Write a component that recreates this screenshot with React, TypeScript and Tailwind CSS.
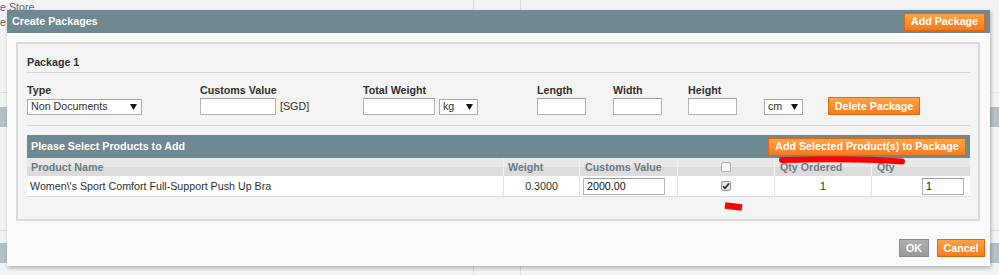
import React from "react";

const orange =
  "bg-[linear-gradient(to_bottom,#ffa346,#f57b1c)] border border-[#df6a0c] text-white font-bold flex items-center justify-center leading-none";

function Arrow() {
  return (
    <svg width="7" height="6" viewBox="0 0 7 6">
      <path d="M0 0 L7 0 L3.5 6 Z" fill="#111" />
    </svg>
  );
}

function Select({ w, text }: { w: string; text: string }) {
  return (
    <div
      className={`${w} h-[16px] border border-[#a9a9a9] bg-white flex items-center justify-between pl-[3px] pr-[4px] leading-none`}
    >
      <span>{text}</span>
      <Arrow />
    </div>
  );
}

function Input({ w, value }: { w: string; value?: string }) {
  return (
    <div
      className={`${w} h-[17px] border border-[#b3b3b3] border-t-[#9c9c9c] bg-white flex items-center pl-[3px] leading-none text-[#111]`}
    >
      {value}
    </div>
  );
}

function Field({
  w,
  label,
  children,
}: {
  w: string;
  label: string;
  children: React.ReactNode;
}) {
  return (
    <div className={`${w} flex flex-col gap-[2px]`}>
      <div className="h-[12px] leading-[12px] font-bold text-[#2f2f2f]">{label}</div>
      <div className="h-[17px] flex items-center">{children}</div>
    </div>
  );
}

function Background() {
  const col = (
    <>
      <div className="h-[14px]" />
      <div className="h-[20px] bg-[#b3c1c6]" />
      <div className="h-[104px] border-b border-[#dcdcdc]" />
      <div className="h-[12px]" />
      <div className="h-[20px] bg-[#b3c1c6]" />
    </>
  );
  return (
    <div className="flex h-full">
      <div className="w-[474px] border-r border-[#dcdcdc] flex flex-col">
        <div className="h-[93px] border-b border-[#dcdcdc] text-[#666] leading-[15px]">
          e Store
          <br />e
        </div>
        {col}
      </div>
      <div className="w-[47px] border-r border-[#dcdcdc]" />
      <div className="flex-1 flex flex-col">
        <div className="h-[93px] border-b border-[#e6e6e6]" />
        {col}
      </div>
    </div>
  );
}

export default function App() {
  return (
    <div className="relative w-[999px] h-[275px] overflow-hidden bg-[#f3f3f3] font-['Liberation_Sans',Arial,sans-serif] text-[10.7px] text-[#2f2f2f]">
      <Background />

      {/* Modal dialog */}
      <div className="absolute left-[7px] top-[10px] w-[983px] h-[256px] bg-[#fafafa] shadow-[1px_2px_4px_rgba(0,0,0,0.28)] flex flex-col">
        <div className="h-[23px] bg-[#6f8992] flex items-center justify-between pl-[5px] pr-[5px]">
          <span className="text-white font-bold">Create Packages</span>
          <div className={`${orange} w-[81px] h-[18px]`}>Add Package</div>
        </div>

        <div className="pl-[9px] pr-[10px] pt-[9px]">
          <div className="h-[179px] border-2 border-[#dadada] bg-[#f4f4f4] pl-[9px] pr-[8px]">
            <div className="pt-[12px] pb-[4px] leading-[12px] font-bold border-b border-[#d8d8d8]">
              Package 1
            </div>

            <div className="mt-[10px] pb-[10px] border-b border-[#d8d8d8] flex items-end">
              <Field w="w-[173px]" label="Type">
                <Select w="w-[115px]" text="Non Documents" />
              </Field>
              <Field w="w-[163px]" label="Customs Value">
                <Input w="w-[76px]" />
                <span className="ml-[4px]">[SGD]</span>
              </Field>
              <Field w="w-[174px]" label="Total Weight">
                <Input w="w-[72px]" />
                <div className="ml-[4px]">
                  <Select w="w-[39px]" text="kg" />
                </div>
              </Field>
              <Field w="w-[76px]" label="Length">
                <Input w="w-[49px]" />
              </Field>
              <Field w="w-[75px]" label="Width">
                <Input w="w-[49px]" />
              </Field>
              <Field w="w-[76px]" label="Height">
                <Input w="w-[49px]" />
              </Field>
              <Field w="w-[64px]" label="">
                <Select w="w-[39px]" text="cm" />
              </Field>
              <div className="flex flex-col gap-[2px]">
                <div className="h-[12px]" />
                <div className={`${orange} w-[92px] h-[18px]`}>Delete Package</div>
              </div>
            </div>

            <div className="mt-[9px]">
              <div className="h-[23px] bg-[#6f8992] flex items-center justify-between pl-[4px] pr-[4px]">
                <span className="text-white font-bold">Please Select Products to Add</span>
                <div className={`${orange} w-[198px] h-[18px]`}>
                  Add Selected Product(s) to Package
                </div>
              </div>

              <div className="h-[18px] flex bg-[linear-gradient(to_bottom,#e8e8e8_0%,#e8e8e8_48%,#dcdcdc_48%,#dcdcdc_100%)] font-bold text-[#6b7a81] leading-none">
                <div className="w-[477px] pl-[4px] flex items-center border-r border-[#f1f1f1]">
                  Product Name
                </div>
                <div className="w-[76px] pl-[4px] flex items-center border-r border-[#f1f1f1]">
                  Weight
                </div>
                <div className="w-[98px] pl-[5px] flex items-center border-r border-[#f1f1f1]">
                  Customs Value
                </div>
                <div className="w-[97px] flex items-center justify-center border-r border-[#f1f1f1]">
                  <div className="w-[10px] h-[10px] border border-[#b0b0b0] rounded-[2px] bg-[#f6f6f6]" />
                </div>
                <div className="w-[97px] pl-[5px] flex items-center border-r border-[#f1f1f1]">
                  Qty Ordered
                </div>
                <div className="flex-1 pl-[5px] flex items-center">Qty</div>
              </div>

              <div className="h-[21px] flex bg-white border-b border-[#dcdcdc] leading-none">
                <div className="w-[477px] pl-[3px] flex items-center border-r border-[#e2e2e2]">
                  Women\'s Sport Comfort Full-Support Push Up Bra
                </div>
                <div className="w-[76px] flex items-center justify-center border-r border-[#e2e2e2]">
                  0.3000
                </div>
                <div className="w-[98px] pl-[3px] flex items-center border-r border-[#e2e2e2]">
                  <Input w="w-[82px]" value="2000.00" />
                </div>
                <div className="w-[97px] flex items-center justify-center border-r border-[#e2e2e2]">
                  <div className="w-[10px] h-[10px] border border-[#9a9a9a] rounded-[2px] bg-[#e2e2e2] flex items-center justify-center">
                    <svg width="8" height="8" viewBox="0 0 8 8">
                      <path d="M1 4.2 L3 6.3 L7 1.5" stroke="#222" strokeWidth="1.6" fill="none" />
                    </svg>
                  </div>
                </div>
                <div className="w-[97px] flex items-center justify-center border-r border-[#e2e2e2]">
                  1
                </div>
                <div className="flex-1 flex items-center justify-end pr-[6px]">
                  <Input w="w-[42px]" value="1" />
                </div>
              </div>
            </div>
          </div>
        </div>

        <div className="mt-[18px] flex justify-end gap-[8px] pr-[5px]">
          <div className="w-[30px] h-[18px] bg-[linear-gradient(to_bottom,#b0b0b0,#9a9a9a)] border border-[#8c8c8c] text-white font-bold flex items-center justify-center leading-none">
            OK
          </div>
          <div className={`${orange} w-[48px] h-[18px]`}>Cancel</div>
        </div>
      </div>

      {/* red annotation marks */}
      <svg
        className="absolute left-0 top-0 pointer-events-none"
        width="999"
        height="275"
        viewBox="0 0 999 275"
      >
        <path
          d="M782 160 C830 158.5 870 159 902 161.5"
          stroke="#ff0000"
          strokeWidth="6"
          strokeLinecap="round"
          fill="none"
        />
        <path
          d="M725 205.5 L742 207.5"
          stroke="#ff0000"
          strokeWidth="6.5"
          strokeLinecap="butt"
          fill="none"
        />
      </svg>
    </div>
  );
}
